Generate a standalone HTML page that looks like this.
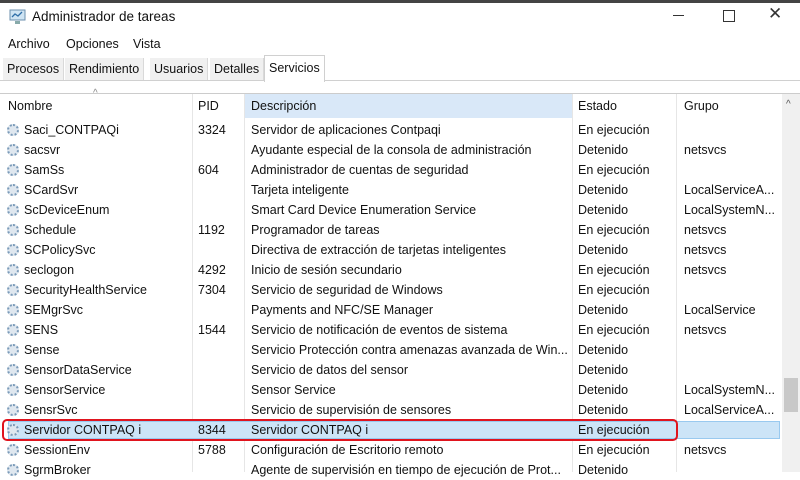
<html><head><style>
body{margin:0;width:800px;height:472px;overflow:hidden;background:#fff;font-family:"Liberation Sans",sans-serif;font-size:12.5px;color:#111;position:relative}
.a{position:absolute;white-space:nowrap}
.tab{position:absolute;top:58px;height:22px;line-height:22px;background:#f0f0f0;border-right:1px solid #d9d9d9;padding:0 4px;font-size:12.5px}
.row{position:absolute;left:0;width:782px;height:20px;line-height:20px}
.row span{position:absolute}
.ic{position:absolute;left:7px;top:4px;width:12px;height:12px;border-radius:50%;border:2px dotted #7a9ab8;box-sizing:border-box;background:#dfe7ef}
</style></head><body>
<div class="a" style="left:0;top:0;width:800px;height:3px;background:#444"></div>
<svg class="a" style="left:9px;top:8px" width="18" height="18"><rect x="1" y="2" width="15" height="10" fill="#cfe4f3" stroke="#6b8fae"/><polyline points="3,9 6,6 9,8 13,4" fill="none" stroke="#2f6fa8" stroke-width="1.3"/><rect x="6" y="13" width="5" height="3" fill="#8aa"/></svg>
<div class="a" style="left:32px;top:9px;font-size:13.5px">Administrador de tareas</div>
<div class="a" style="left:673px;top:15px;width:11px;height:1px;background:#333"></div>
<div class="a" style="left:723px;top:10px;width:10px;height:10px;border:1px solid #333"></div>
<div class="a" style="left:768px;top:4px;font-size:17px;color:#333">✕</div>
<div class="a" style="left:8px;top:37px">Archivo</div>
<div class="a" style="left:66px;top:37px">Opciones</div>
<div class="a" style="left:133px;top:37px">Vista</div>
<div class="a" style="left:0;top:80px;width:800px;height:1px;background:#d0d0d0"></div>
<div class="tab" style="left:3px">Procesos</div>
<div class="tab" style="left:65px">Rendimiento</div>
<div class="tab" style="left:150px">Usuarios</div>
<div class="tab" style="left:210px">Detalles</div>
<div class="tab" style="left:264px;top:55px;height:26px;background:#fff;border:1px solid #d0d0d0;border-bottom:none;line-height:24px">Servicios</div>
<div class="a" style="left:0;top:93px;width:800px;height:1px;background:#ccc"></div>
<div class="a" style="left:244px;top:94px;width:328px;height:24px;background:#d9e8f8"></div>
<div class="a" style="left:192px;top:94px;width:1px;height:378px;background:#e6e6e6"></div>
<div class="a" style="left:244px;top:94px;width:1px;height:378px;background:#e6e6e6"></div>
<div class="a" style="left:572px;top:94px;width:1px;height:378px;background:#e6e6e6"></div>
<div class="a" style="left:676px;top:94px;width:1px;height:378px;background:#e6e6e6"></div>
<div class="a" style="left:93px;top:88px;font-size:10px;color:#888">^</div>
<div class="a" style="left:8px;top:99px">Nombre</div>
<div class="a" style="left:198px;top:99px">PID</div>
<div class="a" style="left:251px;top:99px">Descripción</div>
<div class="a" style="left:578px;top:99px">Estado</div>
<div class="a" style="left:684px;top:99px">Grupo</div>
<div class="a" style="left:782px;top:94px;width:18px;height:378px;background:#f0f0f0"></div>
<div class="a" style="left:786px;top:99px;font-size:10px;color:#555">^</div>
<div class="a" style="left:784px;top:378px;width:14px;height:34px;background:#c8c8c8"></div>
<div class="a" style="left:8px;top:421px;width:772px;height:18px;background:#cce4f7;border:1px solid #99c9ef;box-sizing:border-box"></div>
<div class="a" style="left:2px;top:419px;width:676px;height:22px;border:2px solid #e0141e;border-radius:5px;box-sizing:border-box"></div>
<div id="rows"></div>
<script>
var d=[["Saci_CONTPAQi","3324","Servidor de aplicaciones Contpaqi","En ejecución",""],
["sacsvr","","Ayudante especial de la consola de administración","Detenido","netsvcs"],
["SamSs","604","Administrador de cuentas de seguridad","En ejecución",""],
["SCardSvr","","Tarjeta inteligente","Detenido","LocalServiceA..."],
["ScDeviceEnum","","Smart Card Device Enumeration Service","Detenido","LocalSystemN..."],
["Schedule","1192","Programador de tareas","En ejecución","netsvcs"],
["SCPolicySvc","","Directiva de extracción de tarjetas inteligentes","Detenido","netsvcs"],
["seclogon","4292","Inicio de sesión secundario","En ejecución","netsvcs"],
["SecurityHealthService","7304","Servicio de seguridad de Windows","En ejecución",""],
["SEMgrSvc","","Payments and NFC/SE Manager","Detenido","LocalService"],
["SENS","1544","Servicio de notificación de eventos de sistema","En ejecución","netsvcs"],
["Sense","","Servicio Protección contra amenazas avanzada de Win...","Detenido",""],
["SensorDataService","","Servicio de datos del sensor","Detenido",""],
["SensorService","","Sensor Service","Detenido","LocalSystemN..."],
["SensrSvc","","Servicio de supervisión de sensores","Detenido","LocalServiceA..."],
["Servidor CONTPAQ i","8344","Servidor CONTPAQ i","En ejecución",""],
["SessionEnv","5788","Configuración de Escritorio remoto","En ejecución","netsvcs"],
["SgrmBroker","","Agente de supervisión en tiempo de ejecución de Prot...","Detenido",""]];
var h="";d.forEach(function(r,i){h+='<div class="row" style="top:'+(120+20*i)+'px"><i class="ic"></i><span style="left:24px">'+r[0]+'</span><span style="left:198px">'+r[1]+'</span><span style="left:251px">'+r[2]+'</span><span style="left:578px">'+r[3]+'</span><span style="left:684px">'+r[4]+'</span></div>'});
document.getElementById("rows").innerHTML=h;
</script>
</body></html>
